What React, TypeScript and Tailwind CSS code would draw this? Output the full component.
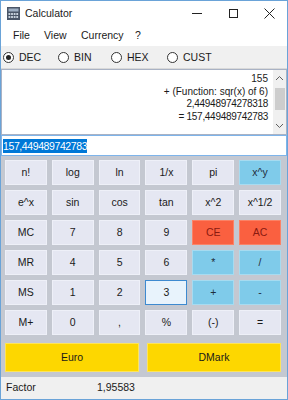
import React from 'react';

type Key = { label: string; tone?: 'cyan' | 'red' | 'focus' };

const rows: Key[][] = [
  [{ label: 'n!' }, { label: 'log' }, { label: 'ln' }, { label: '1/x' }, { label: 'pi' }, { label: 'x^y', tone: 'cyan' }],
  [{ label: 'e^x' }, { label: 'sin' }, { label: 'cos' }, { label: 'tan' }, { label: 'x^2' }, { label: 'x^1/2' }],
  [{ label: 'MC' }, { label: '7' }, { label: '8' }, { label: '9' }, { label: 'CE', tone: 'red' }, { label: 'AC', tone: 'red' }],
  [{ label: 'MR' }, { label: '4' }, { label: '5' }, { label: '6' }, { label: '*', tone: 'cyan' }, { label: '/', tone: 'cyan' }],
  [{ label: 'MS' }, { label: '1' }, { label: '2' }, { label: '3', tone: 'focus' }, { label: '+', tone: 'cyan' }, { label: '-', tone: 'cyan' }],
  [{ label: 'M+' }, { label: '0' }, { label: ',' }, { label: '%' }, { label: '(-)' }, { label: '=' }],
];

const toneClass = (tone?: Key['tone']) => {
  if (tone === 'cyan') return 'bg-[#7fcbea] border-[#a6dbf0] text-[#1f2d3a]';
  if (tone === 'red') return 'bg-[#fa6040] border-[#fb8266] text-[#8a1a10]';
  if (tone === 'focus') return 'bg-[#e8f3fc] border-[#3d8ad0] text-[#1a1a1a]';
  return 'bg-[#e5e7f2] border-[#eef0f8] text-[#1a1a1a]';
};

const Radio = ({ label, checked }: { label: string; checked?: boolean }) => (
  <div className="flex items-center gap-[5px]">
    <span className="w-[11px] h-[11px] rounded-full border border-[#333] bg-white flex items-center justify-center">
      {checked && <span className="w-[5px] h-[5px] rounded-full bg-[#222]" />}
    </span>
    <span>{label}</span>
  </div>
);

const AppIcon = () => (
  <svg width="13" height="13" viewBox="0 0 13 13">
    <rect x="0" y="0" width="13" height="13" fill="#4a5668" />
    <rect x="1.5" y="1.5" width="10" height="3" fill="#9fb0c4" />
    {[0, 1, 2, 3].map(c =>
      [0, 1].map(r => (
        <rect key={`${c}-${r}`} x={1.5 + c * 2.6} y={6 + r * 3} width="1.8" height="2" fill="#c9d3de" />
      ))
    )}
  </svg>
);

export default function App() {
  return (
    <div
      className="w-[288px] h-[400px] border border-[#6aa3d8] bg-[#f0f0f0] flex flex-col text-[10.5px] text-[#1a1a1a] overflow-hidden"
      style={{ fontFamily: '"Liberation Sans", Arial, sans-serif' }}
    >
      {/* title bar */}
      <div className="h-[24px] shrink-0 bg-white flex items-center">
        <div className="ml-[6px] mt-[1px]"><AppIcon /></div>
        <span className="ml-[5px] text-[10.5px] leading-none mt-[1px]">Calculator</span>
        <div className="ml-auto flex items-center h-full">
          <div className="w-[36px] flex justify-center">
            <span className="block w-[10px] h-px bg-[#222]" />
          </div>
          <div className="w-[36px] flex justify-center">
            <span className="block w-[9px] h-[9px] border border-[#222]" />
          </div>
          <div className="w-[36px] flex justify-center">
            <svg width="11" height="11" viewBox="0 0 11 11">
              <path d="M0.5 0.5 L10.5 10.5 M10.5 0.5 L0.5 10.5" stroke="#222" strokeWidth="1" />
            </svg>
          </div>
        </div>
      </div>

      {/* menu */}
      <div className="h-[21px] shrink-0 bg-white flex items-center pl-[12px] pt-[1px] whitespace-nowrap">
        <span className="w-[31px] shrink-0">File</span>
        <span className="w-[37px] shrink-0">View</span>
        <span className="w-[54px] shrink-0">Currency</span>
        <span>?</span>
      </div>

      {/* base selector */}
      <div className="h-[23px] shrink-0 flex items-center pl-[2px] pt-[1px] border-b border-[#d9d9d9]">
        <div className="w-[55px]"><Radio label="DEC" checked /></div>
        <div className="w-[53px]"><Radio label="BIN" /></div>
        <div className="w-[56px]"><Radio label="HEX" /></div>
        <Radio label="CUST" />
      </div>

      {/* history */}
      <div className="h-[66px] shrink-0 bg-white border border-[#a9b2c4] flex text-[10px]">
        <div className="flex-1 flex flex-col items-end pr-[5px] pt-[3px] leading-[12.6px]">
          <span>155</span>
          <span>+ (Function: sqr(x) of 6)</span>
          <span className="tracking-[-0.3px]">2,44948974278318</span>
          <span className="tracking-[-0.3px]">= 157,449489742783</span>
        </div>
        <div className="w-[13px] bg-[#f0f0f0] flex flex-col items-center">
          <svg width="9" height="14" viewBox="0 0 9 14" className="mt-[2px]">
            <path d="M1 8 L4.5 4.5 L8 8" stroke="#606060" fill="none" />
          </svg>
          <div className="w-[10px] h-[22px] bg-[#cdcdcd] mt-[2px]" />
          <svg width="9" height="14" viewBox="0 0 9 14" className="mt-auto mb-[1px]">
            <path d="M1 5 L4.5 8.5 L8 5" stroke="#606060" fill="none" />
          </svg>
        </div>
      </div>

      {/* input */}
      <div className="h-[21px] shrink-0 bg-white border border-[#7eb4ea] flex items-center pl-px">
        <span className="bg-[#0078d7] text-white text-[10.5px] leading-[14px] tracking-[-0.4px]">157,449489742783</span>
      </div>

      {/* keypad */}
      <div className="h-[221px] shrink-0 bg-[#c4c8d1] pl-[4px] pr-[6px] pt-[4px] flex flex-col">
        <div className="grid grid-cols-6 gap-[5px]">
          {rows.flat().map((k, i) => (
            <div
              key={i}
              className={`h-[25px] border flex items-center justify-center ${toneClass(k.tone)}`}
            >
              {k.label}
            </div>
          ))}
        </div>
        <div className="grid grid-cols-2 gap-[8px] mt-[8px]">
          <div className="h-[29px] bg-[#fdd700] border border-[#fde45a] flex items-center justify-center">Euro</div>
          <div className="h-[29px] bg-[#fdd700] border border-[#fde45a] flex items-center justify-center">DMark</div>
        </div>
      </div>

      {/* factor */}
      <div className="flex-1 flex items-center pl-[5px]">
        <span className="w-[91px]">Factor</span>
        <span>1,95583</span>
      </div>
    </div>
  );
}
